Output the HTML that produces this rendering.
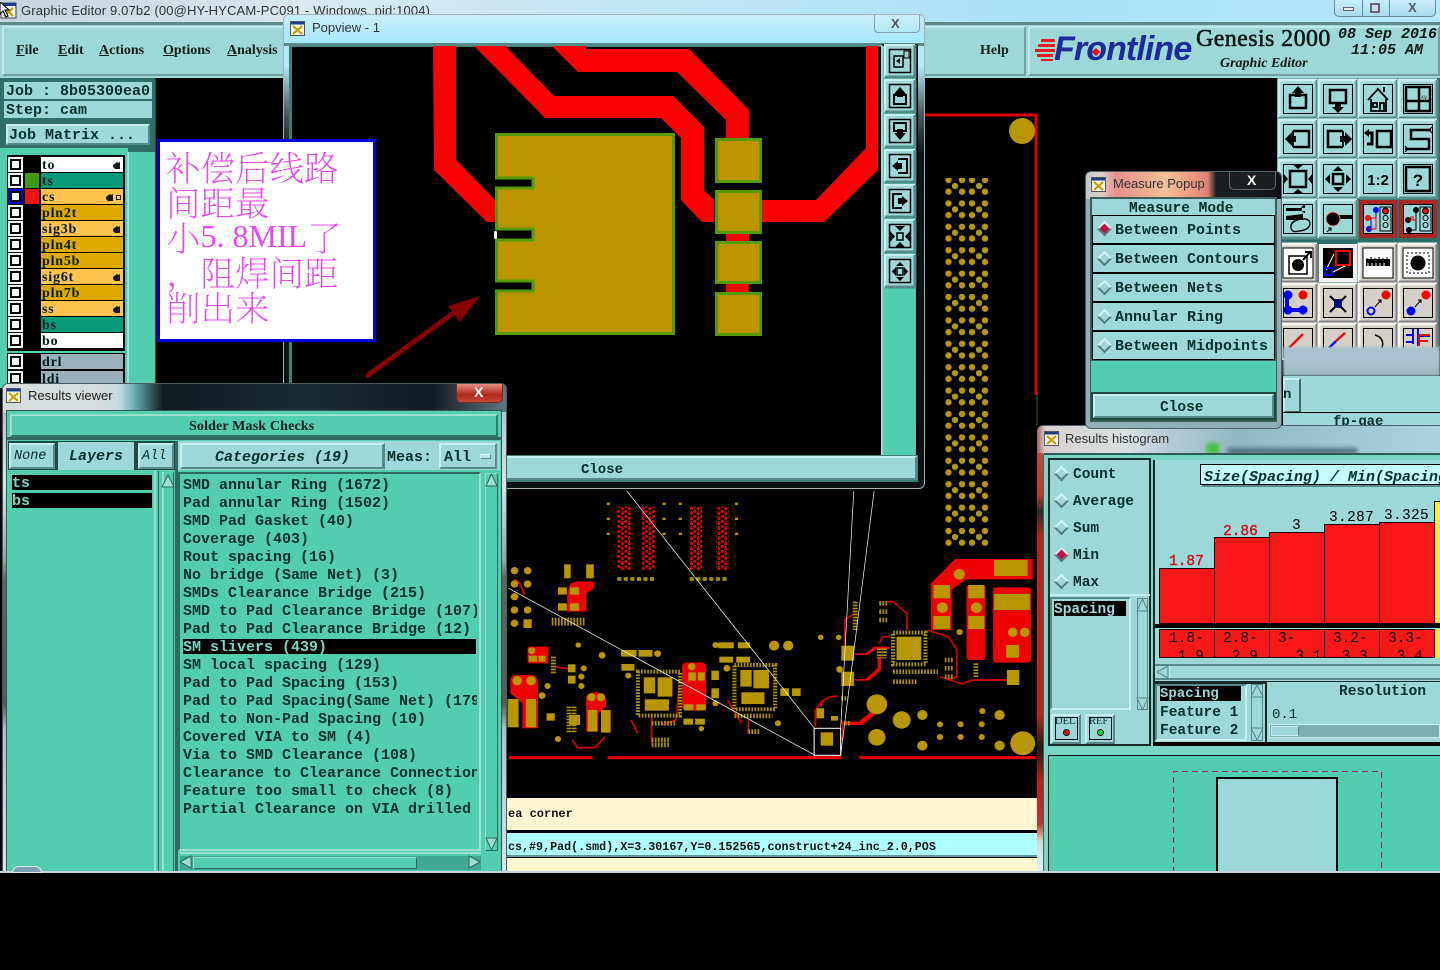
<!DOCTYPE html>
<html><head><meta charset="utf-8"><style>
html,body{margin:0;padding:0;background:#000;width:1440px;height:873px;overflow:hidden}
.a{position:absolute;box-sizing:border-box}
.t{position:absolute;white-space:pre;font:bold 15px/18px "Liberation Mono",monospace;color:#03302a;margin-top:2px}
.m1{margin-top:1px}.m0{margin-top:0}
.s{font-family:"Liberation Serif",serif}
.b{position:absolute;box-sizing:border-box;background:#9dd8d8;border:2px solid;border-color:#c6efef #558a88 #558a88 #c6efef}
.r{position:absolute;width:11px;height:11px;box-sizing:border-box;transform:rotate(45deg);border:2px solid;border-color:#d6f4f4 #527c7c #527c7c #d6f4f4;background:#9dd8d8}
.sel{background:#c0104c}
.row{position:absolute;left:41px;width:82px;height:15px;box-sizing:border-box;padding-left:1px;font:bold 14px/15px "Liberation Serif",serif;letter-spacing:.8px;color:#031a18}
.cb{position:absolute;left:8px;width:15px;height:15px;box-sizing:border-box;background:#fff}
.cb::after{content:"";position:absolute;box-sizing:border-box;left:2px;top:2px;width:11px;height:11px;background:#fff;border:2px solid #000}
.cj{position:absolute;z-index:8;left:166px;height:35px;font:200 34.500px/35px 'Noto Serif CJK SC','Liberation Serif',serif;color:#e848f0;white-space:pre}
svg{position:absolute;left:0;top:0}
</style></head><body>

<!-- PCB background -->
<svg width="1440" height="873" viewBox="0 0 1440 873" style="z-index:1">
<defs>
<pattern id="dm" width="44" height="23.400" patternUnits="userSpaceOnUse" x="945" y="177"><g fill="#b89600"><circle cx="3.500" cy="3" r="3.200"/><circle cx="17" cy="3" r="3.200"/><circle cx="27" cy="3" r="3.200"/><circle cx="40" cy="3" r="3.200"/><circle cx="3.500" cy="14.700" r="3.200"/><circle cx="17" cy="14.700" r="3.200"/><circle cx="27" cy="14.700" r="3.200"/><circle cx="40" cy="14.700" r="3.200"/></g><circle cx="10" cy="9" r="3.200" fill="#a89c10"/><circle cx="34" cy="9" r="3.200" fill="#a89c10"/></pattern>
<pattern id="rd" width="20" height="15" patternUnits="userSpaceOnUse"><circle cx="5" cy="4" r="4.500" fill="#f00000"/><circle cx="15" cy="11" r="4.500" fill="#e80000"/><circle cx="15" cy="4" r="1.500" fill="#a89000"/></pattern>
</defs>
<path d="M925 115H1036V395" fill="none" stroke="#e00000" stroke-width="3"/>
<path d="M1037 395V425" stroke="#2c6a10" stroke-width="1"/>
<circle cx="1022" cy="131" r="13" fill="#b89600"/>
<rect x="945" y="178" width="44" height="370" fill="url(#dm)"/>
<g transform="translate(500 480) scale(.3448 .3333)">
<g fill="url(#rd)"><rect x="340" y="80" width="40" height="190"/><rect x="412" y="80" width="40" height="190"/><rect x="548" y="80" width="38" height="190"/><rect x="627" y="80" width="36" height="190"/></g>
<g stroke="#b89600" stroke-width="9" stroke-dasharray="7 38" fill="none"><path d="M314 68V180M476 68V180M523 68V180M686 68V180"/></g>
<path d="M340 297H450M550 297H660" stroke="#a09000" stroke-width="11" stroke-dasharray="12 7"/>
<!-- red blobs -->
<g fill="#f00000">
<path d="M1250 310L1320 237H1545V298H1350L1310 330V450H1250Z"/>
<rect x="1353" y="315" width="55" height="225" rx="8"/>
<rect x="1430" y="322" width="110" height="226" rx="8"/>
<path d="M200 320Q205 305 225 305H272V325L250 340V395H195V345Z"/>
<path d="M30 600Q32 585 50 585H95Q110 590 110 610V745H65V670L30 640Z"/>
<rect x="528" y="547" width="70" height="145" rx="14"/>
<rect x="80" y="500" width="60" height="50" rx="6"/>
<path d="M250 650Q255 637 280 637Q305 640 308 660V680L285 700V755H250Z"/>
<path d="M1095 680L1040 725H990V735H1050L1100 695Z"/>
<path d="M1030 520H1060L1085 500H1130V507H1090L1065 525H1030Z"/>
<path d="M1030 597H1060L1095 565V530H1105V570L1070 602H1030Z"/>
</g>
<g fill="none" stroke="#d80000" stroke-width="5">
<path d="M1130 470L1110 470L1100 490M1120 365H1140L1180 400V450M1240 450L1300 470L1325 510V590L1300 600M1275 590L1340 612L1370 600H1480M1000 500V420L1030 400M930 680Q935 650 980 648M915 740V690L935 660M990 780Q1000 760 990 720M210 780L225 803H275L305 770M40 300Q60 300 70 345M380 720L400 760M160 560L215 570M520 620L510 720L470 735M660 660L700 730M440 700V790M720 720V760"/>
</g>
<!-- gold pads -->
<g fill="#b89600">
<rect x="1433" y="240" width="97" height="48"/><circle cx="1332" cy="283" r="16"/>
<rect x="1257" y="315" width="48" height="40"/><circle cx="1283" cy="383" r="16"/><rect x="1257" y="408" width="48" height="39"/>
<rect x="1358" y="315" width="47" height="40"/><circle cx="1382" cy="383" r="16"/><rect x="1358" y="408" width="47" height="39"/>
<rect x="1433" y="342" width="104" height="48"/><circle cx="1487" cy="457" r="14"/><circle cx="1522" cy="457" r="14"/><rect x="1468" y="495" width="37" height="38"/>
<rect x="1150" y="470" width="72" height="70"/><rect x="1470" y="570" width="36" height="45"/>
<rect x="990" y="497" width="37" height="45"/><rect x="990" y="575" width="37" height="43"/>
<circle cx="1093" cy="673" r="30"/><circle cx="1165" cy="720" r="26"/><circle cx="1093" cy="772" r="25"/><circle cx="1225" cy="705" r="15"/><circle cx="1225" cy="797" r="15"/><circle cx="1449" cy="705" r="15"/><circle cx="1449" cy="797" r="15"/><circle cx="1516" cy="790" r="36"/>
<circle cx="1399" cy="693" r="9"/><circle cx="1276" cy="733" r="9"/><circle cx="1336" cy="733" r="9"/><circle cx="1397" cy="733" r="9"/><circle cx="1276" cy="771" r="9"/><circle cx="1336" cy="771" r="9"/><circle cx="1397" cy="771" r="9"/><circle cx="1333" cy="456" r="9"/><circle cx="930" cy="472" r="8"/><circle cx="982" cy="472" r="8"/><circle cx="985" cy="568" r="10"/>
<circle cx="795" cy="497" r="15"/><circle cx="836" cy="497" r="15"/><rect x="633" y="487" width="45" height="18"/><rect x="690" y="487" width="35" height="18"/><circle cx="625" cy="495" r="9"/>
<rect x="813" y="625" width="25" height="23"/><rect x="847" y="625" width="25" height="23"/><circle cx="806" cy="730" r="9"/>
<rect x="636" y="530" width="40" height="18"/><rect x="685" y="530" width="40" height="18"/><circle cx="658" cy="565" r="10"/>
<rect x="613" y="572" width="22" height="28"/><rect x="613" y="625" width="22" height="30"/><circle cx="625" cy="670" r="9"/>
<rect x="351" y="510" width="45" height="20"/><rect x="402" y="510" width="40" height="20"/><circle cx="457" cy="521" r="10"/><rect x="352" y="552" width="38" height="20"/><circle cx="372" cy="587" r="9"/>
<rect x="533" y="673" width="28" height="18"/><rect x="569" y="673" width="28" height="18"/><circle cx="556" cy="560" r="11"/><rect x="546" y="577" width="22" height="25"/><rect x="574" y="577" width="20" height="25"/><rect x="532" y="716" width="28" height="18"/><rect x="566" y="716" width="28" height="18"/><circle cx="584" cy="746" r="8"/>
<circle cx="42" cy="272" r="11"/><circle cx="80" cy="272" r="11"/><circle cx="42" cy="312" r="11"/><circle cx="80" cy="312" r="11"/><circle cx="42" cy="350" r="11"/><circle cx="42" cy="390" r="11"/><circle cx="80" cy="390" r="11"/><circle cx="42" cy="430" r="11"/><rect x="68" y="418" width="24" height="26"/>
<rect x="186" y="253" width="19" height="42"/><rect x="250" y="253" width="22" height="42"/><rect x="168" y="322" width="26" height="22"/><rect x="203" y="322" width="26" height="22"/><rect x="168" y="370" width="26" height="22"/><rect x="203" y="370" width="26" height="22"/>
<circle cx="296" cy="526" r="10"/><circle cx="227" cy="495" r="8"/><circle cx="138" cy="618" r="9"/><circle cx="122" cy="647" r="10"/><rect x="197" y="553" width="22" height="24"/><rect x="197" y="587" width="22" height="24"/><circle cx="243" cy="565" r="9"/><circle cx="236" cy="590" r="9"/><circle cx="236" cy="618" r="9"/>
<circle cx="92" cy="512" r="10"/><rect x="83" y="527" width="24" height="18"/><rect x="112" y="527" width="20" height="18"/>
<circle cx="50" cy="602" r="14"/><circle cx="90" cy="602" r="14"/><rect x="75" y="657" width="30" height="85"/><rect x="22" y="657" width="32" height="85"/>
<circle cx="265" cy="652" r="12"/><circle cx="293" cy="652" r="12"/><rect x="254" y="690" width="28" height="65"/><rect x="293" y="690" width="28" height="68"/><rect x="200" y="705" width="32" height="30"/><rect x="135" y="700" width="24" height="22"/><circle cx="168" cy="777" r="9"/>
<rect x="930" y="757" width="36" height="40"/><rect x="918" y="685" width="22" height="30"/><rect x="960" y="708" width="20" height="14"/>
<!-- chips -->
<rect x="417" y="592" width="33" height="48"/><rect x="457" y="592" width="43" height="58"/><rect x="420" y="658" width="70" height="34"/>
<rect x="697" y="570" width="33" height="50"/><rect x="735" y="570" width="45" height="55"/><rect x="700" y="637" width="67" height="35"/>
</g>
<g fill="none" stroke="#a89000" stroke-dasharray="5 4">
<rect x="400" y="575" width="122" height="132" stroke-width="12"/>
<rect x="680" y="555" width="118" height="133" stroke-width="12"/>
<rect x="1140" y="458" width="94" height="95" stroke-width="12"/>
<path stroke-width="14" d="M150 420H245M150 430H245M200 680V760M215 680V760M1100 505V535M1115 505V535M1140 575H1270M1140 605H1210M440 730H510M680 708H790M720 755H755M440 780H490M440 795H490M155 530V580M1030 365V450M1100 370H1125M1100 395H1125M1100 420H1125M1290 540H1315M1290 565H1315M1290 590H1315M1380 550V595M990 655H1010M1000 730H1015"/>
</g>
<path d="M25 833H268M312 833H990M1042 833H1555" stroke="#e00000" stroke-width="10"/>
<path d="M25 325L912 825M368 33L912 745M988 745L1026 33M988 825L1085 33" stroke="#fff" stroke-width="2" fill="none"/>
<rect x="911" y="745" width="77" height="81" fill="none" stroke="#fff" stroke-width="3"/>
</g>
</svg>

<!-- bottom message area -->
<div class="a" style="z-index:2;left:500px;top:798px;width:537px;height:32px;background:#fdf8d2"></div>
<div class="t m1" style="z-index:2;left:508px;top:805px;font-size:12px;line-height:16px;color:#111">ea corner</div>
<div class="a" style="z-index:2;left:500px;top:830px;width:537px;height:3px;background:#000"></div>
<div class="a" style="z-index:2;left:500px;top:833px;width:537px;height:24px;background:#aeffff;border-bottom:2px solid #5a9a9a"></div>
<div class="a" style="z-index:2;left:500px;top:857px;width:537px;height:14px;background:#fdf8d2;border-top:1px solid #000"></div>
<div class="t" style="z-index:2;left:508px;top:838px;font-size:11.700px;line-height:15px;color:#111">cs,#9,Pad(.smd),X=3.30167,Y=0.152565,construct+24_inc_2.0,POS</div>

<!-- main title & menu -->
<div class="a" style="z-index:3;left:0;top:0;width:1440px;height:22px;background:linear-gradient(90deg,#c6d4dc 0,#d8e8ee 300px,#a8e2f8 1040px,#b4e8fb 1440px)"></div>
<svg width="18" height="18" viewBox="0 0 18 18" style="z-index:3;left:0;top:2px"><rect x="1" y="1" width="15" height="15" fill="#e8f0e8" stroke="#445"/><rect x="1" y="1" width="15" height="3" fill="#223c8c"/><path d="M4 6L13 14M13 6L4 14" stroke="#c0a000" stroke-width="2"/><path d="M0 0V12L3 9L6 15L8 14L5 8H9Z" fill="#fff" stroke="#000" stroke-width="1"/></svg>
<div class="a" style="z-index:3;left:21px;top:3px;font:13px/16px 'Liberation Sans',sans-serif;color:#333;white-space:pre;letter-spacing:.15px">Graphic Editor 9.07b2 (00@HY-HYCAM-PC091 - Windows, pid:1004)</div>
<div class="a" style="z-index:3;left:1334px;top:-1px;width:102px;height:18px;border:1px solid #6b8a98;border-radius:0 0 5px 5px;background:linear-gradient(#c8eefb,#a8dcee)"></div>
<div class="a" style="z-index:3;left:1362px;top:0;width:1px;height:17px;background:#6b8a98"></div>
<div class="a" style="z-index:3;left:1389px;top:0;width:1px;height:17px;background:#6b8a98"></div>
<div class="a" style="z-index:3;left:1343px;top:7px;width:11px;height:4px;background:#e8eef0;border:1px solid #667"></div>
<div class="a" style="z-index:3;left:1370px;top:3px;width:10px;height:10px;background:#cde;border:2px solid #667"></div>
<div class="a" style="z-index:3;left:1408px;top:0;font:bold 13px/15px 'Liberation Sans',sans-serif;color:#556">X</div>
<div class="a" style="z-index:3;left:0;top:22px;width:1440px;height:3px;background:#5e8a8a"></div>
<div class="a" style="z-index:3;left:0;top:25px;width:1440px;height:53px;background:#9dd8d8"></div>
<div class="a" style="z-index:3;left:2px;top:26px;width:1024px;height:50px;background:#9dd8d8;border:2px solid;border-color:#bfeaea #709f9f #709f9f #bfeaea"></div>
<div class="a" style="z-index:3;left:1028px;top:26px;width:412px;height:50px;background:#9dd8d8;border:2px solid;border-color:#bfeaea #709f9f #709f9f #bfeaea"></div>
<div class="t s m1" style="z-index:3;left:16px;top:41px;font-size:14px;color:#102018"><u>F</u>ile</div>
<div class="t s m1" style="z-index:3;left:58px;top:41px;font-size:14px;color:#102018"><u>E</u>dit</div>
<div class="t s m1" style="z-index:3;left:99px;top:41px;font-size:14px;color:#102018"><u>A</u>ctions</div>
<div class="t s m1" style="z-index:3;left:163px;top:41px;font-size:14px;color:#102018"><u>O</u>ptions</div>
<div class="t s m1" style="z-index:3;left:227px;top:41px;font-size:14px;color:#102018"><u>A</u>nalysis</div>
<div class="t s m1" style="z-index:3;left:980px;top:41px;font-size:14px;color:#102018">Help</div>
<!-- logo -->
<svg width="1440" height="80" viewBox="0 0 1440 80" style="z-index:3"><g fill="#f01818"><rect x="1041" y="39" width="14" height="3"/><rect x="1038" y="44" width="17" height="3"/><rect x="1035" y="49" width="20" height="3"/><rect x="1037" y="54" width="16" height="3"/><rect x="1041" y="59" width="12" height="2"/></g></svg>
<div class="a" style="z-index:3;left:1054px;top:29px;font:italic bold 34px/40px 'Liberation Sans',sans-serif;color:#1a2d98;white-space:pre;letter-spacing:-.9px">Frontline</div>
<div class="a" style="z-index:3;left:1093px;top:49px;width:6px;height:6px;background:#e81010;transform:rotate(45deg)"></div>
<div class="a s" style="z-index:3;left:1196px;top:24px;font:24px/30px 'Liberation Serif',serif;color:#0a1a14;white-space:pre;letter-spacing:.4px;-webkit-text-stroke:.6px #0a1a14">Genesis 2000</div>
<div class="a" style="z-index:3;left:1220px;top:55px;font:italic bold 14px/18px 'Liberation Serif',serif;color:#0a1a14;white-space:pre">Graphic Editor</div>
<div class="t m1" style="z-index:3;left:1338px;top:25px;font:italic bold 15px/18px 'Liberation Mono',monospace;color:#0a1a14">08 Sep 2016</div>
<div class="t" style="z-index:3;left:1351px;top:40px;font:italic bold 15px/18px 'Liberation Mono',monospace;color:#0a1a14">11:05 AM</div>

<!-- left panel -->
<div class="a" style="z-index:3;left:0;top:78px;width:155px;height:310px;background:#2e6e66"></div>
<div class="a" style="z-index:3;left:155px;top:78px;width:1px;height:310px;background:#1c4a44"></div>
<div class="a" style="z-index:3;left:4px;top:82px;width:148px;height:17px;background:#9dd8d8"></div>
<div class="a" style="z-index:3;left:4px;top:101px;width:148px;height:17px;background:#9dd8d8"></div>
<div class="t" style="z-index:4;left:6px;top:81px">Job : 8b05300ea0</div>
<div class="t" style="z-index:4;left:6px;top:100px">Step: cam</div>
<div class="b" style="z-index:4;left:6px;top:124px;width:144px;height:21px"></div>
<div class="t" style="z-index:4;left:9px;top:125px">Job Matrix ...</div>
<div class="a" style="z-index:3;left:0;top:148px;width:128px;height:240px;background:#52cdae"></div>
<div class="a" style="z-index:3;left:127px;top:152px;width:28px;height:236px;background:#52cdae;border-left:2px solid #9dd8d8"></div>
<div class="a" style="z-index:3;left:7px;top:155px;width:118px;height:196px;background:#000"></div>
<div class="a" style="z-index:3;left:7px;top:353px;width:118px;height:35px;background:#000"></div>
<div style="position:absolute;z-index:4;left:0;top:0">
<div class="cb" style="top:157px"></div><div class="row" style="top:157px;padding-top:1px;background:#fff">to</div>
<div class="cb" style="top:173px"></div><div class="a" style="left:25px;top:173px;width:14px;height:15px;background:#3f9a10"></div><div class="row" style="top:173px;padding-top:1px;background:#079a78">ts</div>
<div class="cb" style="top:189px;background:#0000c0"></div><div class="a" style="left:25px;top:189px;width:14px;height:15px;background:#fa0f0f"></div><div class="row" style="top:189px;padding-top:1px;background:#ffc34e">cs</div>
<div class="cb" style="top:205px"></div><div class="row" style="top:205px;padding-top:1px;background:#e0aa00">pln2t</div>
<div class="cb" style="top:221px"></div><div class="row" style="top:221px;padding-top:1px;background:#ffc34e">sig3b</div>
<div class="cb" style="top:237px"></div><div class="row" style="top:237px;padding-top:1px;background:#e0aa00">pln4t</div>
<div class="cb" style="top:253px"></div><div class="row" style="top:253px;padding-top:1px;background:#e0aa00">pln5b</div>
<div class="cb" style="top:269px"></div><div class="row" style="top:269px;padding-top:1px;background:#ffc34e">sig6t</div>
<div class="cb" style="top:285px"></div><div class="row" style="top:285px;padding-top:1px;background:#e0aa00">pln7b</div>
<div class="cb" style="top:301px"></div><div class="row" style="top:301px;padding-top:1px;background:#ffc34e">ss</div>
<div class="cb" style="top:317px"></div><div class="row" style="top:317px;padding-top:1px;background:#079a78">bs</div>
<div class="cb" style="top:333px"></div><div class="row" style="top:333px;padding-top:1px;background:#fff">bo</div>
<div class="cb" style="top:354px"></div><div class="row" style="top:354px;padding-top:1px;background:#9ab0ba">drl</div>
<div class="cb" style="top:371px"></div><div class="row" style="top:371px;padding-top:1px;background:#9ab0ba">ldi</div>
</div>
<svg width="130" height="340" viewBox="0 0 130 340" style="z-index:5"><g fill="#1a1a1a"><path d="M113 165l4-3 1 1 2-1v7h-5l-2-2zM113 229l4-3 1 1 2-1v7h-5l-2-2zM113 277l4-3 1 1 2-1v7h-5l-2-2zM113 309l4-3 1 1 2-1v7h-5l-2-2zM106 197l4-3 1 1 2-1v7h-5l-2-2z"/></g><rect x="116.500" y="195.500" width="4" height="4" fill="none" stroke="#222"/></svg>

<!-- toolbar -->
<div class="a" style="z-index:3;left:1277px;top:78px;width:163px;height:270px;background:#2e6e66"></div>
<svg width="1440" height="360" viewBox="0 0 1440 360" style="z-index:3">
<defs>
<g id="t"><rect width="38" height="38" fill="#9dd8d8"/><path d="M0 38V0H38" fill="none" stroke="#c8f0f0" stroke-width="3"/><path d="M38 0V38H0" fill="none" stroke="#568c8a" stroke-width="3"/><rect x="4.500" y="4.500" width="29" height="29" fill="none" stroke="#000"/></g>
<g id="g"><rect width="38" height="38" fill="#d4d0c8"/><path d="M0 38V0H38" fill="none" stroke="#f4f4f0" stroke-width="3"/><path d="M38 0V38H0" fill="none" stroke="#808080" stroke-width="3"/><rect x="4.500" y="4.500" width="29" height="29" fill="none" stroke="#000"/></g>
<g id="w"><rect width="38" height="38" fill="#d4d0c8"/><path d="M0 38V0H38" fill="none" stroke="#f4f4f0" stroke-width="3"/><path d="M38 0V38H0" fill="none" stroke="#808080" stroke-width="3"/><rect x="4" y="4" width="30" height="30" fill="#fff" stroke="#000"/></g>
<g id="tl"><rect x="4.500" y="4.500" width="29" height="29" fill="#9dd8d8" stroke="#000"/><rect x="21" y="7" width="11" height="24" fill="none" stroke="#000"/><circle cx="26.500" cy="11" r="3" fill="#f00" stroke="#000"/><circle cx="26.500" cy="18" r="2.500" fill="none" stroke="#000"/><circle cx="26.500" cy="25" r="2.500" fill="none" stroke="#000"/></g>
</defs>
<g transform="translate(1279 80)"><use href="#t"/><path d="M11 15H27V28H11Z" fill="none" stroke="#000" stroke-width="2.500"/><path d="M19 6L25 13H13Z" fill="#000"/><rect x="16" y="12" width="6" height="5" fill="#000"/></g>
<g transform="translate(1319 80)"><use href="#t"/><path d="M11 10H27V23H11Z" fill="none" stroke="#000" stroke-width="2.500"/><path d="M19 33L25 27H13Z" fill="#000"/><rect x="16" y="22" width="6" height="6" fill="#000"/></g>
<g transform="translate(1359 80)"><use href="#t"/><path d="M9 20L19 9L29 20M12 19V31H27V19M21 31V23H25V31M14 23H18V27H14ZM25 12V7" fill="none" stroke="#000" stroke-width="1.800"/></g>
<g transform="translate(1399 80)"><use href="#t"/><path d="M7 7H31V31H7ZM7 21H31M20 7V31" fill="none" stroke="#000" stroke-width="2.500"/><text x="22" y="19" font-size="6" font-family="Liberation Sans" fill="#333">xy</text></g>
<g transform="translate(1279 120)"><use href="#t"/><path d="M14 11H30V27H14" fill="none" stroke="#000" stroke-width="2.500"/><path d="M14 11V27" stroke="#000" stroke-width="2"/><path d="M6 19L13 12V26Z" fill="#000"/><rect x="11" y="16" width="6" height="6" fill="#000"/></g>
<g transform="translate(1319 120)"><use href="#t"/><path d="M24 11H9V27H24" fill="none" stroke="#000" stroke-width="2.500"/><path d="M24 11V27" stroke="#000" stroke-width="2"/><path d="M33 19L26 12V26Z" fill="#000"/><rect x="21" y="16" width="6" height="6" fill="#000"/></g>
<g transform="translate(1359 120)"><use href="#t"/><path d="M18 11H32V27H18Z" fill="none" stroke="#000" stroke-width="2.500"/><path d="M8 13H13V24H8" fill="none" stroke="#000" stroke-width="3"/><path d="M5 13L10 9V17Z" fill="#000"/></g>
<g transform="translate(1399 120)"><use href="#t"/><path d="M32 10H12V19H30V29H6" fill="none" stroke="#000" stroke-width="2.500"/><path d="M33 7L30 10L33 13M6 26L9 29L6 32" fill="none" stroke="#000"/></g>
<g transform="translate(1279 160)"><use href="#t"/><rect x="11" y="11" width="16" height="16" fill="none" stroke="#000" stroke-width="2.500"/><path d="M19 9L13 4H25ZM19 29L13 34H25ZM9 19L4 13V25ZM29 19L34 13V25Z" fill="#000"/></g>
<g transform="translate(1319 160)"><use href="#t"/><rect x="14" y="14" width="10" height="10" fill="none" stroke="#000" stroke-width="2.500"/><path d="M19 6L14 11H24ZM19 32L14 27H24ZM6 19L11 14V24ZM32 19L27 14V24Z" fill="#000"/></g>
<g transform="translate(1359 160)"><use href="#t"/><text x="19" y="25" text-anchor="middle" font-size="15" font-weight="bold" font-family="Liberation Sans" fill="#000">1:2</text></g>
<g transform="translate(1399 160)"><use href="#t"/><rect x="7" y="7" width="24" height="24" fill="none" stroke="#000" stroke-width="2.500"/><text x="19" y="26" text-anchor="middle" font-size="17" font-weight="bold" font-family="Liberation Sans" fill="#000">?</text></g>
<g transform="translate(1279 200)"><use href="#t"/><path d="M7 9H23M7 18H16M20 31Q30 30 31 24Q31 18 22 19Q11 21 12 28Q13 33 20 31" fill="none" stroke="#000" stroke-width="1.400"/><path d="M7 8H26V11H7ZM26 5a4 4 0 1 0 0.100 8zM7 16L24 14V20H7Z" fill="#000"/></g>
<g transform="translate(1319 200)"><use href="#t"/><path d="M5 14H33M5 26H33M14 5V33M25 5V33" stroke="#7ea" stroke-opacity=".5"/><rect x="18" y="15" width="16" height="4" fill="#000"/><circle cx="14" cy="19" r="7" fill="#000" stroke="#f88"/><path d="M8 32L12 28M9 28H12V31" stroke="#000" fill="none"/></g>
<g transform="translate(1359 200)"><rect width="38" height="38" fill="#a82828"/><use href="#tl"/><path d="M7 18H12V30H8M17 8V18H12" fill="none" stroke="#00c" stroke-width="1"/><circle cx="17" cy="10" r="3" fill="#00f"/><circle cx="9" cy="18" r="3" fill="#f00"/><circle cx="10" cy="29" r="3" fill="#00f"/><path d="M10 18H17V29H10" fill="none" stroke="#f00"/></g>
<g transform="translate(1399 200)"><rect width="38" height="38" fill="#a82828"/><use href="#tl"/><path d="M17 10V30H10" fill="none" stroke="#000"/><circle cx="17" cy="10" r="3" fill="#000"/><circle cx="9" cy="20" r="3" fill="#000"/><circle cx="10" cy="30" r="3" fill="#000"/><path d="M9 20H17M12 16V20M14 16V20" stroke="#d00"/></g>

<g transform="translate(1279 244)"><use href="#w"/><rect x="10" y="12" width="18" height="18" fill="#fff" stroke="#000" stroke-width="1.500"/><circle cx="19" cy="21" r="6" fill="#000"/><path d="M24 16L31 8M26 8H32V14" stroke="#000" stroke-width="2" fill="none"/></g>
<g transform="translate(1319 244)"><rect width="38" height="38" fill="#f0f0f0"/><rect x="4" y="4" width="30" height="30" fill="#000"/><path d="M6 28L15 10M12 29L30 20" stroke="#fff"/><rect x="17" y="7" width="14" height="14" fill="none" stroke="#f00" stroke-width="2"/><rect x="6" y="24" width="7" height="7" fill="none" stroke="#00f" stroke-width="2"/></g>
<g transform="translate(1359 244)"><use href="#w"/><rect x="7" y="15" width="24" height="7" fill="#000"/><path d="M8 14V17M12 13V17M16 14V17M20 13V17M24 14V17M28 13V17" stroke="#000"/><path d="M9 19V22M13 19V22M17 19V22M21 19V22M25 19V22" stroke="#fff"/></g>
<g transform="translate(1399 244)"><use href="#w"/><rect x="8" y="9" width="22" height="20" fill="none" stroke="#000" stroke-dasharray="2 2"/><circle cx="19" cy="19" r="7.500" fill="#000"/></g>
<g transform="translate(1279 284)"><use href="#g"/><path d="M8 11V26H24" stroke="#00f" stroke-width="4" fill="none"/><circle cx="9" cy="11" r="4.500" fill="#00f"/><circle cx="9" cy="26" r="4.500" fill="#00f"/><circle cx="24" cy="26" r="4.500" fill="#00f"/><circle cx="24" cy="11" r="4.500" fill="#f00"/></g>
<g transform="translate(1319 284)"><use href="#g"/><path d="M11 12L27 28M27 12L11 28" stroke="#000" stroke-width="2"/><rect x="15" y="15" width="8" height="9" fill="#006"/></g>
<g transform="translate(1359 284)"><use href="#g"/><circle cx="12" cy="27" r="3.500" fill="none" stroke="#00f" stroke-width="2"/><circle cx="27" cy="11" r="4.500" fill="#f00"/><path d="M16 23L22 16M19 16H22V19" stroke="#000" fill="none"/></g>
<g transform="translate(1399 284)"><use href="#g"/><circle cx="12" cy="27" r="4.500" fill="#00f"/><circle cx="27" cy="11" r="4.500" fill="#f00"/><path d="M16 23L22 16M19 16H22V19" stroke="#000" fill="none"/></g>
<g transform="translate(1279 324)"><use href="#g"/><path d="M10 24L24 10" stroke="#e01010" stroke-width="2.500"/></g>
<g transform="translate(1319 324)"><use href="#g"/><path d="M10 24L17 17" stroke="#1010e0" stroke-width="2.500"/><path d="M17 17L26 9" stroke="#e01010" stroke-width="2.500"/></g>
<g transform="translate(1359 324)"><use href="#g"/><path d="M16 11Q26 14 23 24" fill="none" stroke="#000" stroke-width="1.500"/></g>
<g transform="translate(1399 324)"><use href="#g"/><path d="M7 11H14V18H7M14 5V20M19 5V22M19 12H31M19 17H29" fill="none" stroke="#00e" stroke-width="2"/><path d="M20 11H31M20 17H29M20 11V22" stroke="#e01010" stroke-width="2"/></g>
</svg>
<div class="a" style="z-index:3;left:1283px;top:347px;width:157px;height:29px;background:linear-gradient(180deg,#a8c0d0,#b0c4d0 40%,#9cb8c0);filter:blur(1px)"></div>
<div class="a" style="z-index:3;left:1283px;top:376px;width:157px;height:50px;background:#9dd8d8"></div>
<div class="b" style="z-index:3;left:1283px;top:378px;width:18px;height:35px;border-color:#c6efef #3e6a68 #3e6a68 #c6efef"></div>
<div class="t m0" style="z-index:3;left:1283px;top:386px;font-size:14px">n</div>
<div class="a" style="z-index:3;left:1283px;top:412px;width:157px;height:1px;background:#000"></div>
<div class="t m0" style="z-index:3;left:1333px;top:414px;font-size:14px;line-height:16px;height:12px;overflow:hidden">fp-gae</div>

<!-- Popview window -->
<div class="a" style="z-index:6;left:283px;top:14px;width:642px;height:475px;border:1px solid #a4b0b4;border-radius:6px 6px 6px 0;background:linear-gradient(180deg,#b4ecf8 0,#b4ecf8 50px,#4a5458 100px,#101616 140px,#0c1212 100%);overflow:hidden">
<div class="a" style="left:0;top:0;width:100%;height:28px;background:linear-gradient(180deg,#c8eefa,#a4e8fb)"></div>
<div class="a" style="left:-1px;top:28px;width:644px;height:3px;background:#5a8884"></div>
<div class="a" style="left:5px;top:31px;width:629px;height:436px;background:#3e7e74"></div>
<div class="a" style="left:8px;top:32px;width:589px;height:408px;background:#000"></div>
<div class="a" style="left:597px;top:29px;width:37px;height:411px;background:#52cdae;border-left:2px solid #9dd8d8;border-right:2px solid #000;border-top:2px solid #000"></div>
<div class="b" style="left:9px;top:441px;width:624px;height:24px"></div>
<div class="t" style="left:297px;top:444px;font-size:14px;line-height:18px">Close</div>
<div class="a" style="left:28px;top:5px;font:13px/16px 'Liberation Sans',sans-serif;color:#333;white-space:pre">Popview - 1</div>
<div class="a" style="left:590px;top:-1px;width:46px;height:19px;border:1px solid #82a4b0;border-radius:0 0 4px 4px"></div>
<div class="a" style="left:607px;top:1px;font:bold 13px/15px 'Liberation Sans',sans-serif;color:#556">X</div>
</div>
<svg width="18" height="16" viewBox="0 0 18 16" style="z-index:7;left:290px;top:21px"><rect x=".5" y=".5" width="14" height="14" fill="#f4f4e0" stroke="#556"/><rect x="1" y="1" width="13" height="2.500" fill="#223c8c"/><path d="M3 5L12 13M12 5L3 13" stroke="#c0a000" stroke-width="2"/></svg>

<svg width="1440" height="500" viewBox="0 0 1440 500" style="z-index:7">
<defs><g id="pb"><rect width="30" height="34" fill="#000" x="0" y="-1"/><rect width="30" height="32" fill="#9dd8d8"/><path d="M0 32V0H30" fill="none" stroke="#c8f0f0" stroke-width="2"/><path d="M30 0V32H0" fill="none" stroke="#558a88" stroke-width="3"/><rect x="4.500" y="4.500" width="21" height="23" fill="none" stroke="#000" stroke-width="1.500"/></g></defs>
<path d="M433 46H456V160L495 200V222H487L434 170Z" fill="#fa0000"/>
<path d="M474 46H505L554 96H673L704 127V190L714 200V222H702L681 200V138L661 118H545Z" fill="#fa0000"/>
<path d="M552 46H586V49H689L749 110V140H726V120L677 72H578Z" fill="#fa0000"/>
<path d="M866 46H878V170L824 222H762V200H816L866 148Z" fill="#fa0000"/>
<path d="M726 233H749V241H726ZM726 283H749V292H726Z" fill="#fa0000"/>
<path d="M496.500 134.500H673.500V333.500H496.500V291H533V281H496.500V240H533V229H496.500V188H533V178H496.500Z" fill="#bb9500" stroke="#549a00" stroke-width="3"/>
<g fill="#bb9500" stroke="#549a00" stroke-width="3"><rect x="716.500" y="139.500" width="44" height="42"/><rect x="716.500" y="191.500" width="44" height="41"/><rect x="716.500" y="242.500" width="44" height="40"/><rect x="716.500" y="293.500" width="44" height="41"/></g>
<rect x="494" y="231" width="3" height="8" rx="1.500" fill="#fff"/>
<!-- popview toolbar -->
<g transform="translate(885 45)"><use href="#pb"/><rect x="9" y="11" width="9" height="11" fill="none" stroke="#000" stroke-width="1.500"/><rect x="19" y="6" width="5" height="7" fill="none" stroke="#000"/><path d="M11 16L15 13V19Z" fill="#000"/></g>
<g transform="translate(885 80)"><use href="#pb"/><path d="M9 15H21V24H9Z" fill="none" stroke="#000" stroke-width="2"/><path d="M15 7L21 14H9Z" fill="#000"/><rect x="12" y="12" width="6" height="5" fill="#000"/></g>
<g transform="translate(885 115)"><use href="#pb"/><path d="M9 8H21V16H9Z" fill="none" stroke="#000" stroke-width="2"/><path d="M15 25L21 18H9Z" fill="#000"/><rect x="12" y="14" width="6" height="5" fill="#000"/></g>
<g transform="translate(885 150)"><use href="#pb"/><path d="M13 9H22V23H13" fill="none" stroke="#000" stroke-width="2"/><path d="M7 16L13 11V21Z" fill="#000"/><rect x="12" y="13" width="5" height="6" fill="#000"/></g>
<g transform="translate(885 185)"><use href="#pb"/><path d="M17 9H8V23H17" fill="none" stroke="#000" stroke-width="2"/><path d="M23 16L17 11V21Z" fill="#000"/><rect x="13" y="13" width="5" height="6" fill="#000"/></g>
<g transform="translate(885 220)"><use href="#pb"/><rect x="12" y="13" width="6" height="7" fill="none" stroke="#000" stroke-width="1.500"/><path d="M15 11L10 6H20ZM15 22L10 27H20ZM10 16.500L5 11V22ZM20 16.500L25 11V22Z" fill="#000"/></g>
<g transform="translate(885 255)"><use href="#pb"/><rect x="12" y="13" width="6" height="7" fill="none" stroke="#000" stroke-width="1.500"/><path d="M15 7L11 11H19ZM15 26L11 22H19ZM7 16.500L11 12V21ZM23 16.500L19 12V21Z" fill="#000"/></g>
</svg>

<!-- annotation -->
<div class="a" style="z-index:8;left:157px;top:139px;width:219px;height:203px;background:#fff;border:3px solid #0000e0"></div>
<div class="cj" style="top:149px">补偿后线路</div>
<div class="cj" style="top:184px">间距最</div>
<div class="cj" style="top:219px">小<span style="font-family:'Liberation Serif';font-size:32px;line-height:35px;vertical-align:top">5. 8MIL</span>了</div>
<div class="cj" style="top:254px">，阻焊间距</div>
<div class="cj" style="top:289px">削出来</div>
<svg width="520" height="400" viewBox="0 0 520 400" style="z-index:8"><path d="M368 375L455 312" stroke="#860000" stroke-width="5" stroke-linecap="round"/><path d="M480 296L448 306L460 322Z" fill="#860000"/></svg>

<!-- Results viewer -->
<div class="a" style="z-index:9;left:2px;top:383px;width:505px;height:490px;border-radius:6px 6px 0 0;border:1px solid #4a5a60;background:linear-gradient(180deg,#a8b8c0 0,#d8e4ec 100px,#90a8a8 175px,#5e6460 195px,#585c58 320px,#aebccc 345px,#d8e4f0 100%);overflow:hidden">
<div class="a" style="left:0;top:0;width:100%;height:28px;background:linear-gradient(90deg,#d6dcdc 0,#d4dcdc 95px,#c8dce0 115px,#6eb4bc 130px,#111c20 160px,#1a2c34 300px,#141c22 430px,#5e7680 503px)"></div>
<div class="a" style="left:453px;top:-1px;width:47px;height:20px;background:linear-gradient(#e89080,#b02818 60%,#c84838);border:1px solid #6a3030;border-radius:0 0 5px 5px"></div>
<div class="a" style="left:471px;top:0;font:bold 14px/16px 'Liberation Sans',sans-serif;color:#fff">X</div>
<div class="a" style="left:25px;top:4px;font:13px/16px 'Liberation Sans',sans-serif;color:#222;white-space:pre">Results viewer</div>
<div class="a" style="left:3px;top:26px;width:496px;height:3px;background:#2e5a54"></div>
<div class="a" style="left:3px;top:29px;width:496px;height:461px;background:#2e5a54"></div>
</div>
<svg width="18" height="16" viewBox="0 0 18 16" style="z-index:10;left:6px;top:388px"><rect x=".5" y=".5" width="14" height="14" fill="#f4f4e0" stroke="#556"/><rect x="1" y="1" width="13" height="2.500" fill="#223c8c"/><path d="M3 5L12 13M12 5L3 13" stroke="#c0a000" stroke-width="2"/></svg>
<div style="position:absolute;z-index:10;left:0;top:0">
<div class="a" style="left:7px;top:411px;width:494px;height:462px;background:#52cdae"></div>
<div class="a" style="left:10px;top:414px;width:488px;height:23px;background:#52cdae;border:2px solid;border-color:#9bdfcf #317a68 #317a68 #9bdfcf"></div>
<div class="a" style="left:7px;top:437px;width:494px;height:3px;background:#2e6a5e"></div>
<div class="t s" style="left:189px;top:416px;font-size:14px;color:#06201a;letter-spacing:.15px">Solder Mask Checks</div>
<div class="a" style="left:8px;top:441px;width:167px;height:29px;background:#1e4a44"></div>
<div class="b" style="left:9px;top:443px;width:46px;height:26px"></div>
<div class="a" style="left:58px;top:442px;width:76px;height:28px;background:#9dd8d8"></div>
<div class="b" style="left:138px;top:443px;width:36px;height:26px"></div>
<div class="t m1" style="left:14px;top:447px;font:italic 13.500px/18px 'Liberation Mono',monospace">None</div>
<div class="t m1" style="left:69px;top:447px;font:italic bold 15px/18px 'Liberation Mono',monospace">Layers</div>
<div class="t m1" style="left:142px;top:447px;font:italic 13.500px/18px 'Liberation Mono',monospace">All</div>
<div class="a" style="left:178px;top:441px;width:322px;height:29px;background:#9dd8d8"></div>
<div class="b" style="left:180px;top:443px;width:205px;height:26px;border-right-width:3px"></div>
<div class="t m1" style="left:215px;top:448px;font:italic bold 15px/18px 'Liberation Mono',monospace">Categories (19)</div>
<div class="t m1" style="left:387px;top:448px">Meas:</div>
<div class="b" style="left:439px;top:443px;width:58px;height:26px"></div>
<div class="t m1" style="left:444px;top:448px">All</div>
<div class="a" style="left:480px;top:454px;width:11px;height:5px;background:#b8e8e8;border:1px solid;border-color:#d8f4f4 #558a88 #558a88 #d8f4f4"></div>
<!-- left list -->
<div class="a" style="left:8px;top:471px;width:148px;height:402px;background:#52cdae;border-right:2px solid #9bdfcf"></div>
<div class="a" style="left:158px;top:471px;width:4px;height:402px;background:#52cdae;border-left:1px solid #2e6a5e"></div>
<div class="a" style="left:162px;top:472px;width:12px;height:401px;background:#52cdae;border-left:2px solid #9bdfcf;border-right:1px solid #2e6a5e"></div>
<svg width="175" height="500" viewBox="0 0 175 500" style="top:470px;left:0"><path d="M168 5L174 17H162Z" fill="#9bdfcf" stroke="#2e6a5e"/></svg>
<div class="a" style="left:12px;top:475px;width:140px;height:15px;background:#000"></div>
<div class="a" style="left:12px;top:493px;width:140px;height:15px;background:#000"></div>
<div class="t m1" style="left:12px;top:474px;color:#78d6c0">ts</div>
<div class="t m1" style="left:12px;top:492px;color:#78d6c0">bs</div>
<div class="a" style="left:175px;top:441px;width:3px;height:432px;background:#2e6a5e"></div>
<!-- right list -->
<div class="a" style="left:178px;top:472px;width:303px;height:379px;border:2px solid;border-color:#2e6a5e #9bdfcf #9bdfcf #2e6a5e"></div>
<div class="a" style="left:183px;top:639px;width:293px;height:15px;background:#000"></div>
<div class="a" style="left:183px;top:477px;width:294px;height:350px;overflow:hidden;font:bold 15px/18px 'Liberation Mono',monospace;color:#03302a;white-space:pre">SMD annular Ring (1672)
Pad annular Ring (1502)
SMD Pad Gasket (40)
Coverage (403)
Rout spacing (16)
No bridge (Same Net) (3)
SMDs Clearance Bridge (215)
SMD to Pad Clearance Bridge (107)
Pad to Pad Clearance Bridge (12)
<span style="color:#78d6c0">SM slivers (439)</span>
SM local spacing (129)
Pad to Pad Spacing (153)
Pad to Pad Spacing(Same Net) (179)
Pad to Non-Pad Spacing (10)
Covered VIA to SM (4)
Via to SMD Clearance (108)
Clearance to Clearance Connection
Feature too small to check (8)
Partial Clearance on VIA drilled</div>
<div class="a" style="left:485px;top:473px;width:13px;height:378px;border:1px solid;border-color:#9bdfcf #2e6a5e #2e6a5e #9bdfcf"></div>
<svg width="500" height="873" viewBox="0 0 500 873"><path d="M491.500 474L497 486H486Z" fill="#9bdfcf" stroke="#2e6a5e"/><path d="M491.500 850L497 838H486Z" fill="#9bdfcf" stroke="#2e6a5e"/></svg>
<div class="a" style="left:180px;top:856px;width:301px;height:14px;background:#3fa88e"></div>
<div class="a" style="left:193px;top:857px;width:224px;height:12px;background:#52cdae;border:1px solid;border-color:#9bdfcf #2e6a5e #2e6a5e #9bdfcf"></div>
<svg width="500" height="873" viewBox="0 0 500 873"><path d="M180 862L191 856V868Z" fill="#9bdfcf" stroke="#2e6a5e"/><path d="M480 862L469 856V868Z" fill="#9bdfcf" stroke="#2e6a5e"/></svg>
<div class="a" style="left:180px;top:852px;width:301px;height:2px;background:#9bdfcf"></div>
</div>

<!-- Measure popup -->
<div class="a" style="z-index:11;left:1085px;top:171px;width:197px;height:258px;border:1px solid #50606a;border-radius:6px;background:#90b0b8;overflow:hidden">
<div class="a" style="left:0;top:0;width:100%;height:27px;background:linear-gradient(90deg,#c0c8c8 0,#d8d0c8 15px,#ea9090 30px,#f0c098 80px,#e89080 112px,#d88070 122px,#1c2020 130px,#101416 195px)"></div>
<div class="a" style="left:143px;top:-1px;width:47px;height:19px;background:#1c2020;border:1px solid #5e6e70;border-radius:0 0 5px 5px"></div>
<div class="a" style="left:161px;top:0;font:bold 14px/16px 'Liberation Sans',sans-serif;color:#fff">X</div>
<div class="a" style="left:27px;top:4px;font:13px/16px 'Liberation Sans',sans-serif;color:#333;white-space:pre">Measure Popup</div>
</div>
<svg width="18" height="16" viewBox="0 0 18 16" style="z-index:12;left:1091px;top:177px"><rect x=".5" y=".5" width="14" height="14" fill="#f4f4e0" stroke="#556"/><rect x="1" y="1" width="13" height="2.500" fill="#223c8c"/><path d="M3 5L12 13M12 5L3 13" stroke="#c0a000" stroke-width="2"/></svg>
<div style="position:absolute;z-index:12;left:0;top:0">
<div class="a" style="left:1090px;top:197px;width:187px;height:225px;background:#3a5e5a"></div>
<div class="a" style="left:1092px;top:199px;width:183px;height:161px;background:#000"></div>
<div class="a" style="left:1092px;top:199px;width:183px;height:16px;background:#9dd8d8"></div>
<div class="t" style="left:1129px;top:198px;font-size:14.500px;line-height:18px">Measure Mode</div>
<div class="a" style="left:1093px;top:216px;width:181px;height:27px;background:#9dd8d8"></div>
<div class="a" style="left:1093px;top:245px;width:181px;height:27px;background:#9dd8d8"></div>
<div class="a" style="left:1093px;top:274px;width:181px;height:27px;background:#9dd8d8"></div>
<div class="a" style="left:1093px;top:303px;width:181px;height:27px;background:#9dd8d8"></div>
<div class="a" style="left:1093px;top:332px;width:181px;height:27px;background:#9dd8d8"></div>
<div class="r sel" style="left:1099px;top:223px"></div><div class="r" style="left:1099px;top:253px"></div><div class="r" style="left:1099px;top:282px"></div><div class="r" style="left:1099px;top:311px"></div><div class="r" style="left:1099px;top:340px"></div>
<div class="t" style="left:1115px;top:220px">Between Points</div>
<div class="t" style="left:1115px;top:249px">Between Contours</div>
<div class="t" style="left:1115px;top:278px">Between Nets</div>
<div class="t" style="left:1115px;top:307px">Annular Ring</div>
<div class="t" style="left:1115px;top:336px">Between Midpoints</div>
<div class="a" style="left:1091px;top:361px;width:185px;height:31px;background:#52cdae"></div>
<div class="a" style="left:1091px;top:392px;width:185px;height:28px;background:#1e4a44"></div>
<div class="b" style="left:1093px;top:394px;width:181px;height:24px"></div>
<div class="t" style="left:1160px;top:397px;font-size:14.500px">Close</div>
</div>

<!-- Results histogram -->
<div class="a" style="z-index:10;left:1037px;top:425px;width:403px;height:448px;border-radius:6px 0 0 0;background:#2e6e66;overflow:hidden;border-top:1px solid #506070">
<div class="a" style="left:0;top:0;width:100%;height:28px;background:linear-gradient(90deg,#a06060 0,#d8d0d0 8px,#d8e0e0 90px,#b8ccd8 130px,#90b8c0 200px,#a8d4e0 403px)"></div>
<div class="a" style="left:170px;top:17px;width:12px;height:11px;background:#40c040;filter:blur(2px)"></div>
<div class="a" style="left:190px;top:22px;width:130px;height:6px;background:#507080;filter:blur(2px)"></div>
<div class="a" style="left:28px;top:5px;font:13px/16px 'Liberation Sans',sans-serif;color:#333;white-space:pre">Results histogram</div>
<div class="a" style="left:0;top:27px;width:6px;height:421px;background:linear-gradient(180deg,#c04848 0,#c83030 10%,#2a2a2a 14%,#c02020 20%,#c82020 62%,#201818 70%,#c81818 78%,#c03030 88%,#d8d4c8 92%,#d8eaf0 96%,#e4f0f0 100%)"></div>
<div class="a" style="left:7px;top:27px;width:396px;height:3px;background:#2e5a54"></div>
</div>
<svg width="18" height="16" viewBox="0 0 18 16" style="z-index:11;left:1044px;top:431px"><rect x=".5" y=".5" width="14" height="14" fill="#f4f4e0" stroke="#556"/><rect x="1" y="1" width="13" height="2.500" fill="#223c8c"/><path d="M3 5L12 13M12 5L3 13" stroke="#c0a000" stroke-width="2"/></svg>
<div style="position:absolute;z-index:11;left:0;top:0">
<div class="a" style="left:1044px;top:455px;width:396px;height:300px;background:#7ad6c4"></div>
<div class="a" style="left:1048px;top:458px;width:103px;height:288px;background:#9dd8d8;border:2px solid #1a2a28"></div>
<div class="a" style="left:1050px;top:594px;width:100px;height:2px;background:#c6efef"></div>
<div class="r" style="left:1056px;top:468px"></div><div class="r" style="left:1056px;top:495px"></div><div class="r" style="left:1056px;top:522px"></div><div class="r sel" style="left:1056px;top:549px"></div><div class="r" style="left:1056px;top:576px"></div>
<div class="t" style="left:1073px;top:464px;font-size:14.500px">Count</div>
<div class="t" style="left:1073px;top:491px;font-size:14.500px">Average</div>
<div class="t" style="left:1073px;top:518px;font-size:14.500px">Sum</div>
<div class="t" style="left:1073px;top:545px;font-size:14.500px">Min</div>
<div class="t" style="left:1073px;top:572px;font-size:14.500px">Max</div>
<div class="a" style="left:1050px;top:597px;width:81px;height:113px;background:#9dd8d8;border:2px solid;border-color:#558a88 #c6efef #c6efef #558a88"></div>
<div class="a" style="left:1054px;top:601px;width:72px;height:15px;background:#000"></div>
<div class="t m1" style="left:1054px;top:600px;font-size:14.500px;color:#9dd8d8">Spacing</div>
<div class="a" style="left:1137px;top:598px;width:11px;height:112px;background:#9dd8d8;border:1px solid #558a88"></div>
<div class="b" style="left:1051px;top:714px;width:30px;height:30px"></div>
<div class="b" style="left:1085px;top:714px;width:30px;height:30px"></div>
<div class="a" style="left:1055px;top:717px;width:23px;height:23px;border:1px solid #000"></div>
<div class="a" style="left:1089px;top:717px;width:23px;height:23px;border:1px solid #000"></div>
<div class="t m0" style="left:1055px;top:716px;font:10.500px/12px 'Liberation Serif',serif">DEL</div>
<div class="t m0" style="left:1089px;top:716px;font:10.500px/12px 'Liberation Serif',serif">REF</div>
<div class="a" style="left:1063px;top:729px;width:7px;height:7px;border-radius:50%;background:#e81010;border:1px solid #000"></div>
<div class="a" style="left:1097px;top:729px;width:7px;height:7px;border-radius:50%;background:#10e010;border:1px solid #000"></div>
<!-- chart -->
<div class="a" style="left:1153px;top:460px;width:287px;height:283px;background:#9dd8d8;border-left:2px solid #1a2a28"></div>
<div class="a" style="left:1200px;top:464px;width:240px;height:21px;background:#c4fbfb;border:1px solid #000;border-right:none;box-shadow:2px 2px 0 #558a88"></div>
<div class="t" style="left:1204px;top:467px;font:italic bold 15px/18px 'Liberation Mono',monospace;width:236px;overflow:hidden">Size(Spacing) / Min(Spacing)</div>
<div class="a" style="left:1159px;top:568px;width:56px;height:56px;background:#f81818;border:1px solid #200"></div>
<div class="a" style="left:1214px;top:537px;width:56px;height:87px;background:#f81818;border:1px solid #200"></div>
<div class="a" style="left:1269px;top:532px;width:56px;height:92px;background:#f81818;border:1px solid #200"></div>
<div class="a" style="left:1324px;top:524px;width:56px;height:100px;background:#f81818;border:1px solid #200"></div>
<div class="a" style="left:1379px;top:522px;width:56px;height:102px;background:#f81818;border:1px solid #200"></div>
<div class="a" style="left:1434px;top:501px;width:6px;height:123px;background:#f8f020;border:1px solid #200;border-right:none"></div>
<div class="a" style="left:1155px;top:624px;width:285px;height:4px;background:#000"></div>
<div class="t" style="left:1169px;top:551px;font-size:14.500px;font-weight:normal;color:#d01020;-webkit-text-stroke:.4px #d01020">1.87</div>
<div class="t" style="left:1223px;top:521px;font-size:14.500px;font-weight:normal;color:#d01020;-webkit-text-stroke:.4px #d01020">2.86</div>
<div class="t" style="left:1292px;top:515px;font-size:14.500px;font-weight:normal;color:#000">3</div>
<div class="t" style="left:1329px;top:507px;font-size:14.500px;font-weight:normal;color:#000;letter-spacing:.3px">3.287</div>
<div class="t" style="left:1384px;top:505px;font-size:14.500px;font-weight:normal;color:#000;letter-spacing:.3px">3.325</div>
<div class="a" style="left:1159px;top:629px;width:281px;height:29px;background:#f81818;border:1px solid #200;border-right:none"></div>
<div class="a" style="left:1214px;top:629px;width:1px;height:29px;background:#200"></div><div class="a" style="left:1269px;top:629px;width:1px;height:29px;background:#200"></div><div class="a" style="left:1324px;top:629px;width:1px;height:29px;background:#200"></div><div class="a" style="left:1379px;top:629px;width:1px;height:29px;background:#200"></div>
<div class="a" style="left:1434px;top:629px;width:6px;height:29px;background:#f8f020;border-left:1px solid #200"></div>
<div class="a" style="left:1160px;top:630px;width:275px;height:27px;overflow:hidden;font:14.500px/18px 'Liberation Mono',monospace;color:#111;white-space:pre">
<span class="a" style="left:9px;top:0">1.8-
 1.9</span><span class="a" style="left:63px;top:0">2.8-
 2.9</span><span class="a" style="left:118px;top:0">3-
  3.1</span><span class="a" style="left:173px;top:0">3.2-
 3.3</span><span class="a" style="left:228px;top:0">3.3-
 3.4</span></div>
<div class="a" style="left:1155px;top:664px;width:285px;height:16px;background:#9dd8d8;border-top:2px solid #558a88;border-bottom:2px solid #558a88"></div>
<div class="a" style="left:1169px;top:666px;width:271px;height:12px;background:#9dd8d8;border-left:1px solid #c6efef"></div>
<div class="a" style="left:1153px;top:681px;width:287px;height:3px;background:#1a2a28"></div>
<div class="a" style="left:1155px;top:684px;width:92px;height:57px;background:#9dd8d8;border:2px solid;border-color:#558a88 #c6efef #c6efef #558a88"></div>
<div class="a" style="left:1160px;top:686px;width:81px;height:15px;background:#000"></div>
<div class="t m0" style="left:1160px;top:685px;font-size:14px;color:#9dd8d8">Spacing</div>
<div class="t m1" style="left:1160px;top:703px;font-size:14.500px">Feature 1</div>
<div class="t m1" style="left:1160px;top:721px;font-size:14.500px">Feature 2</div>
<div class="a" style="left:1251px;top:684px;width:12px;height:57px;background:#9dd8d8;border:1px solid #558a88"></div>
<div class="a" style="left:1265px;top:682px;width:175px;height:60px;background:#9dd8d8;border-left:2px solid #1a2a28"></div>
<div class="t m0" style="left:1339px;top:683px;font-size:14.500px">Resolution</div>
<div class="t m1" style="left:1272px;top:705px;font-size:14px;font-weight:normal">0.1</div>
<div class="a" style="left:1269px;top:724px;width:171px;height:14px;background:#7aaeb0;border:1px solid #c6efef"></div>
<div class="a" style="left:1271px;top:726px;width:28px;height:10px;background:#9dd8d8;border:1px solid #c6efef;border-right-color:#558a88"></div>
<div class="a" style="left:1153px;top:742px;width:287px;height:4px;background:#000"></div>
<svg width="1440" height="873" viewBox="0 0 1440 873"><path d="M1142.500 599L1148 611H1137Z" fill="#9dd8d8" stroke="#558a88"/><path d="M1142.500 710L1148 698H1137Z" fill="#9dd8d8" stroke="#558a88"/><path d="M1157 672L1168 666V678Z" fill="#9dd8d8" stroke="#558a88"/><path d="M1257 685L1263 697H1251Z" fill="#9dd8d8" stroke="#558a88"/><path d="M1257 740L1263 728H1251Z" fill="#9dd8d8" stroke="#558a88"/></svg>
<!-- bottom view -->
<div class="a" style="left:1044px;top:746px;width:396px;height:127px;background:#7ad6c4"></div>
<div class="a" style="left:1048px;top:755px;width:392px;height:118px;background:#52cdae;border:1px solid #111;border-right:none;border-bottom:none"></div>
<svg width="1440" height="873" viewBox="0 0 1440 873"><path d="M1173.500 873V771.500H1381.500V873" fill="none" stroke="#a02860" stroke-dasharray="6 4"/></svg>
<div class="a" style="left:1216px;top:777px;width:122px;height:96px;background:#9dd8d8;border:2px solid #000;border-bottom:none"></div>
</div>

<!-- bottom strip -->
<div class="a" style="z-index:13;left:0;top:871px;width:1440px;height:2px;background:#c8d4dc"></div>
<div class="a" style="z-index:13;left:12px;top:866px;width:30px;height:7px;border-radius:15px 15px 0 0;background:#7aa2b0;border:1px solid #dfe8ee"></div>
</body></html>
